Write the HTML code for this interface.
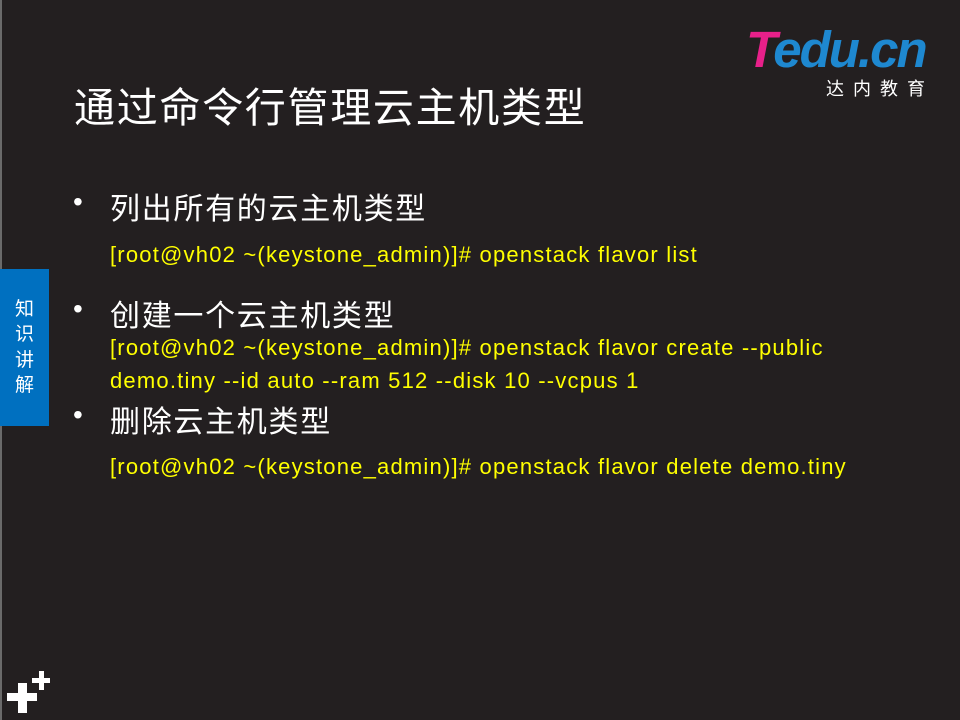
<!DOCTYPE html>
<html><head><meta charset="utf-8"><style>
body{margin:0;width:960px;height:720px;background:#231f20;position:relative;overflow:hidden;font-family:"Liberation Sans","Noto Sans CJK SC",sans-serif;}
.a{position:absolute;white-space:nowrap;}
.t{left:74px;top:74px;font-size:41px;letter-spacing:1.7px;color:#fff;}
.b{font-size:30px;letter-spacing:1.7px;color:#fff;}
.dot{position:absolute;left:73px;font-size:28px;color:#fff;}
.c{font-size:22px;letter-spacing:1.2px;color:#ffff00;left:110px;}
</style></head><body>
<div class="a" style="left:0;top:0;width:2px;height:720px;background:#6a6a6a"></div>
<div class="a t">通过命令行管理云主机类型</div>
<div class="a" style="left:746px;top:20px;font-size:51px;font-weight:bold;font-style:italic;letter-spacing:-2px;color:#1e88d0"><span style="color:#e8208a">T</span>edu.cn</div>
<div class="a" style="left:826px;top:75px;font-size:18px;color:#fff;letter-spacing:9px">达内教育</div>
<div class="dot" style="top:186px">•</div><div class="a b" style="left:110px;top:184px">列出所有的云主机类型</div>
<div class="a c" style="top:242px">[root@vh02 ~(keystone_admin)]# openstack flavor list</div>
<div class="dot" style="top:293px">•</div><div class="a b" style="left:110px;top:291px">创建一个云主机类型</div>
<div class="a c" style="top:335px">[root@vh02 ~(keystone_admin)]# openstack flavor create --public</div>
<div class="a c" style="top:368px">demo.tiny --id auto --ram 512 --disk 10 --vcpus 1</div>
<div class="dot" style="top:399px">•</div><div class="a b" style="left:110px;top:397px">删除云主机类型</div>
<div class="a c" style="top:454px">[root@vh02 ~(keystone_admin)]# openstack flavor delete demo.tiny</div>
<div class="a" style="left:0;top:269px;width:49px;height:157px;background:#0070c0;color:#fff;font-size:19px;line-height:25.3px;text-align:center;padding-top:28px;box-sizing:border-box;white-space:normal">知<br>识<br>讲<br>解</div>
<div class="a" style="left:7px;top:693px;width:30px;height:8px;background:#fff"></div>
<div class="a" style="left:18px;top:683px;width:9px;height:30px;background:#fff"></div>
<div class="a" style="left:32px;top:678px;width:18px;height:5px;background:#fff"></div>
<div class="a" style="left:39px;top:671px;width:5px;height:19px;background:#fff"></div>
</body></html>
